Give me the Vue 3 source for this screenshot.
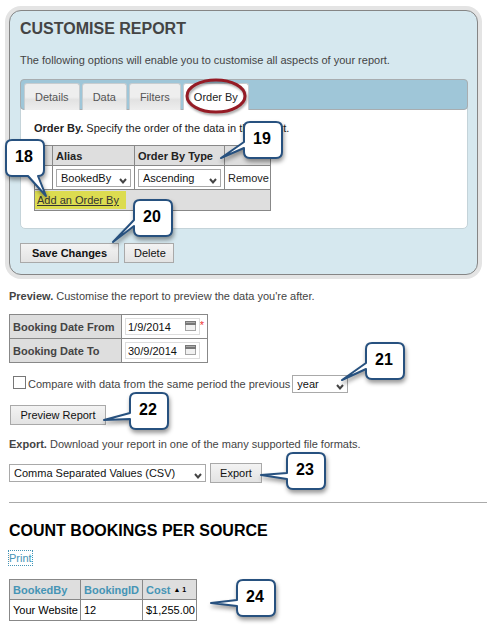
<template>
    <main class="page">
        <form class="panel" @submit.prevent>
            <h1>Customise report</h1>
            <p class="intro">The following options will enable you to customise all aspects of your report.</p>

            <div class="tabs">
                <nav class="tab-bar">
                    <button v-for="tab in tabs" :key="tab" type="button" class="tab"
                        :class="{ active: tab === activeTab }" @click="activeTab = tab">
                        {{ tab }}
                        <svg v-if="tab === 'Order By'" class="ring" viewBox="0 0 64 38">
                            <ellipse cx="32" cy="18" rx="29" ry="16" />
                        </svg>
                    </button>
                </nav>
                <div class="tab-content">
                    <p><b>Order By.</b> Specify the order of the data in the report.</p>
                    <table class="grid order-table">
                        <thead>
                            <tr>
                                <th class="col-handle"></th>
                                <th class="col-alias">Alias</th>
                                <th class="col-type">Order By Type</th>
                                <th class="col-action"></th>
                            </tr>
                        </thead>
                        <tbody>
                            <tr>
                                <td></td>
                                <td>
                                    <span class="select">
                                        <select v-model="alias" aria-label="Alias">
                                            <option>BookedBy</option>
                                            <option>BookingID</option>
                                            <option>Cost</option>
                                        </select>
                                        <svg viewBox="0 0 8 6"><path d="M1 1l3 3.4L7 1" /></svg>
                                    </span>
                                </td>
                                <td>
                                    <span class="select">
                                        <select v-model="direction" aria-label="Order By Type">
                                            <option>Ascending</option>
                                            <option>Descending</option>
                                        </select>
                                        <svg viewBox="0 0 8 6"><path d="M1 1l3 3.4L7 1" /></svg>
                                    </span>
                                </td>
                                <td><a href="#" class="remove">Remove</a></td>
                            </tr>
                            <tr class="add-row">
                                <td colspan="4"><a href="#" class="add">Add an Order By</a></td>
                            </tr>
                        </tbody>
                    </table>
                </div>
            </div>

            <div class="buttons">
                <button type="submit" class="btn save">Save Changes</button>
                <button type="button" class="btn delete">Delete</button>
            </div>
        </form>

        <section class="preview">
            <p><b>Preview.</b> Customise the report to preview the data you're after.</p>
            <table class="grid dates">
                <tbody>
                    <tr v-for="field in dateFields" :key="field.id">
                        <th><label :for="field.id">{{ field.label }}</label></th>
                        <td>
                            <div class="date-cell">
                                <span class="date">
                                    <input :id="field.id" v-model="field.value" type="text">
                                    <svg viewBox="0 0 11 10">
                                        <rect x="0.5" y="0.5" width="10" height="9" fill="#f1f1f1" stroke="#a5a5a5" />
                                        <rect width="11" height="4" fill="#777" />
                                        <rect x="1" y="1" width="9" height="1" fill="#aaa" />
                                    </svg>
                                </span>
                                <span v-if="field.required" class="required">*</span>
                            </div>
                        </td>
                    </tr>
                </tbody>
            </table>
            <div class="compare">
                <input id="compare" v-model="compare" type="checkbox">
                <label for="compare">Compare with data from the same period the previous</label>
                <span class="select period">
                    <select v-model="period" aria-label="Period">
                        <option>year</option>
                        <option>month</option>
                    </select>
                    <svg viewBox="0 0 8 6"><path d="M1 1l3 3.4L7 1" /></svg>
                </span>
            </div>
            <button type="button" class="btn preview-btn">Preview Report</button>
            <p><b>Export.</b> Download your report in one of the many supported file formats.</p>
            <div class="export">
                <span class="select format">
                    <select v-model="format" aria-label="Export format">
                        <option>Comma Separated Values (CSV)</option>
                    </select>
                    <svg viewBox="0 0 8 6"><path d="M1 1l3 3.4L7 1" /></svg>
                </span>
                <button type="button" class="btn export-btn">Export</button>
            </div>
        </section>

        <section class="report">
            <h2>Count bookings per source</h2>
            <a href="#" class="print">Print</a>
            <table class="grid results">
                <thead>
                    <tr>
                        <th class="col-booked"><a href="#">BookedBy</a></th>
                        <th class="col-id"><a href="#">BookingID</a></th>
                        <th class="col-cost">
                            <div class="sorted"><a href="#">Cost</a> <small>▲ 1</small></div>
                        </th>
                    </tr>
                </thead>
                <tbody>
                    <tr v-for="row in rows" :key="row.bookedBy">
                        <td>{{ row.bookedBy }}</td>
                        <td>{{ row.count }}</td>
                        <td>{{ row.cost }}</td>
                    </tr>
                </tbody>
            </table>
        </section>

        <svg class="callouts">
            <g v-for="c in callouts" :key="c.n">
                <path :d="bubble(c)" />
                <text :x="c.x + 18" :y="c.y + 22">{{ c.n }}</text>
            </g>
        </svg>
    </main>
</template>

<script setup>
import { ref } from 'vue';

const tabs = ['Details', 'Data', 'Filters', 'Order By'];
const activeTab = ref('Order By');
const alias = ref('BookedBy');
const direction = ref('Ascending');
const compare = ref(false);
const period = ref('year');
const format = ref('Comma Separated Values (CSV)');

const dateFields = ref([
    { id: 'date-from', label: 'Booking Date From', value: '1/9/2014', required: true },
    { id: 'date-to', label: 'Booking Date To', value: '30/9/2014', required: false }
]);

const rows = [{ bookedBy: 'Your Website', count: 12, cost: '$1,255.00' }];

// x, y: top left corner of the bubble, tip: end of its tail
const callouts = [
    { n: 18, x: 6, y: 140, tip: [46, 196], below: true },
    { n: 19, x: 244, y: 122, tip: [221, 158] },
    { n: 20, x: 134, y: 200, tip: [113, 242] },
    { n: 21, x: 366, y: 343, tip: [342, 380] },
    { n: 22, x: 130, y: 393, tip: [104, 420] },
    { n: 23, x: 287, y: 453, tip: [261, 475] },
    { n: 24, x: 237, y: 580, tip: [211, 603] }
];

const bubble = ({ x, y, tip, below }) => {
    const start = `M${x + 6} ${y}h26q6 0 6 6v24q0 6 -6 6`;
    const end = `V${y + 6}q0 -6 6 -6z`;
    if (below) {
        return `${start}L${tip} L${x + 22} ${y + 36}H${x + 6}q-6 0 -6 -6${end}`;
    }
    return `${start}h-26q-6 0 -6 -6V${y + 26}L${tip} L${x} ${y + 20}${end}`;
};
</script>

<style>
body {
    margin: 0;
    background: #fff;
}
</style>

<style scoped>
* {
    box-sizing: border-box;
}

.page {
    position: relative;
    padding: 5px 0 18px;
    font-family: "Liberation Sans", Arial, sans-serif;
    font-size: 11px;
    line-height: 14px;
    color: #444;
}

h1,
h2 {
    margin: 0;
    font-size: 16px;
    line-height: 20px;
    text-transform: uppercase;
}

p {
    margin: 0;
}

input,
select,
button {
    font: inherit;
    color: #111;
}

.panel {
    margin: 5px 9px 0;
    padding: 8px 9px 11px 10px;
    background: #d6e8ef;
    border: 1px solid #858585;
    border-radius: 12px;
    box-shadow: 0 0 0 4px #e4e4e4;
}

.intro {
    margin: 14px 0 12px;
}

.tabs {
    background: #fff;
    border: 1px solid #c4d3d9;
    border-radius: 5px;
}

.tab-bar {
    display: flex;
    gap: 2px;
    height: 31px;
    margin: -1px;
    padding: 3px 3px 0;
    background: #9fc6d8;
    border: 1px solid #a8adb0;
    border-radius: 4px;
}

.tab {
    position: relative;
    height: 27px;
    padding: 0 10px;
    color: #555;
    background: linear-gradient(#eee 50%, #e2e2e2 60%, #eee);
    border: 1px solid #c8cdd0;
    border-bottom: 0;
    border-radius: 3px 3px 0 0;
}

.tab.active {
    color: #222;
    background: #fff;
    height: 27px;
}

.ring {
    position: absolute;
    left: 0;
    top: -6px;
    width: 64px;
    height: 38px;
    overflow: visible;
    fill: none;
    stroke: #951b25;
    stroke-width: 3;
    filter: drop-shadow(1px 2px 1px rgba(0, 0, 0, 0.35));
}

.tab-content {
    padding: 12px 13px 17px;
    color: #222;
}

.grid {
    border-collapse: collapse;
}

.grid th,
.grid td {
    padding: 0 3px;
    border: 1px solid #888;
    text-align: left;
    white-space: nowrap;
}

.grid th {
    background: #dedede;
}

.grid td {
    background: #fff;
}

.order-table {
    margin-top: 10px;
}

.order-table th {
    height: 20px;
}

.order-table td {
    height: 24px;
}

.col-handle {
    width: 18px;
}

.col-alias {
    width: 82px;
}

.col-type {
    width: 90px;
}

.order-table td:last-child {
    padding-right: 1px;
}

.order-table .add-row td {
    height: 21px;
    padding: 0;
    background: #dedede;
}

.remove {
    color: #222;
    text-decoration: none;
}

.add {
    display: inline-block;
    padding: 2px 7px 2px 2px;
    color: #333;
    background: #dcdc50;
}

.select {
    position: relative;
    display: flex;
    height: 18px;
}

.select select {
    appearance: none;
    width: 100%;
    padding: 0 16px 0 4px;
    background: #fff;
    border: 1px solid #a9a9a9;
    border-radius: 0;
}

.select svg {
    position: absolute;
    right: 4px;
    bottom: 3px;
    width: 8px;
    height: 6px;
    fill: none;
    stroke: #444;
    stroke-width: 2;
    pointer-events: none;
}

.buttons {
    display: flex;
    gap: 5px;
    margin-top: 14px;
}

.btn {
    height: 20px;
    padding: 0 9px;
    background: linear-gradient(#f3f3f3, #e3e3e3);
    border: 1px solid #a9a9a9;
}

.save {
    width: 99px;
    font-weight: bold;
}

.delete {
    width: 50px;
}

.preview {
    margin-left: 9px;
    padding: 14px 0 19px;
    border-bottom: 1px solid #aaa;
}

.dates {
    margin: 11px 0 12px;
}

.dates th {
    width: 112px;
    height: 24px;
}

.date-cell {
    display: flex;
    width: 79px;
}

.date {
    position: relative;
    display: flex;
    width: 75px;
    height: 17px;
}

.date input {
    width: 100%;
    padding: 0 15px 0 2px;
    background: #fff;
    border: 1px solid #ddd;
}

.date svg {
    position: absolute;
    right: 4px;
    top: 3px;
    width: 11px;
    height: 10px;
}

.required {
    color: #e33;
}

.compare {
    display: flex;
    align-items: center;
    gap: 2px;
}

.compare input {
    appearance: none;
    width: 13px;
    height: 13px;
    margin: 0 0 4px 4px;
    background: #fff;
    border: 1px solid #777;
}

.compare input:checked {
    background: #777;
}

.period {
    width: 56px;
}

.preview-btn {
    width: 96px;
    margin: 12px 0 12px 1px;
}

.export {
    display: flex;
    align-items: center;
    gap: 4px;
    margin-top: 12px;
}

.format {
    width: 197px;
}

.export-btn {
    width: 52px;
}

.report {
    margin-left: 9px;
    padding-top: 18px;
    color: #000;
}

.report a {
    color: #4594b5;
    text-decoration: none;
}

.report .print {
    display: inline-block;
    margin: 10px 0 14px;
    outline: 1px dotted #4594b5;
}

.results th {
    height: 20px;
}

.results td {
    height: 21px;
}

.results th,
.results td {
    padding-right: 1px;
}

.col-booked {
    width: 71px;
}

.col-id {
    width: 62px;
}

.col-cost {
    width: 54px;
}

.sorted {
    display: flex;
    align-items: center;
    gap: 3px;
}

.results small {
    font-size: 7px;
}

.callouts {
    position: absolute;
    left: 0;
    top: 0;
    width: 100%;
    height: 100%;
    pointer-events: none;
}

.callouts path {
    fill: #fff;
    stroke: #27517f;
    stroke-width: 2;
    stroke-linejoin: round;
    filter: drop-shadow(1px 3px 2px rgba(0, 0, 0, 0.4));
}

.callouts text {
    font-size: 16px;
    font-weight: bold;
    fill: #000;
    text-anchor: middle;
}
</style>
